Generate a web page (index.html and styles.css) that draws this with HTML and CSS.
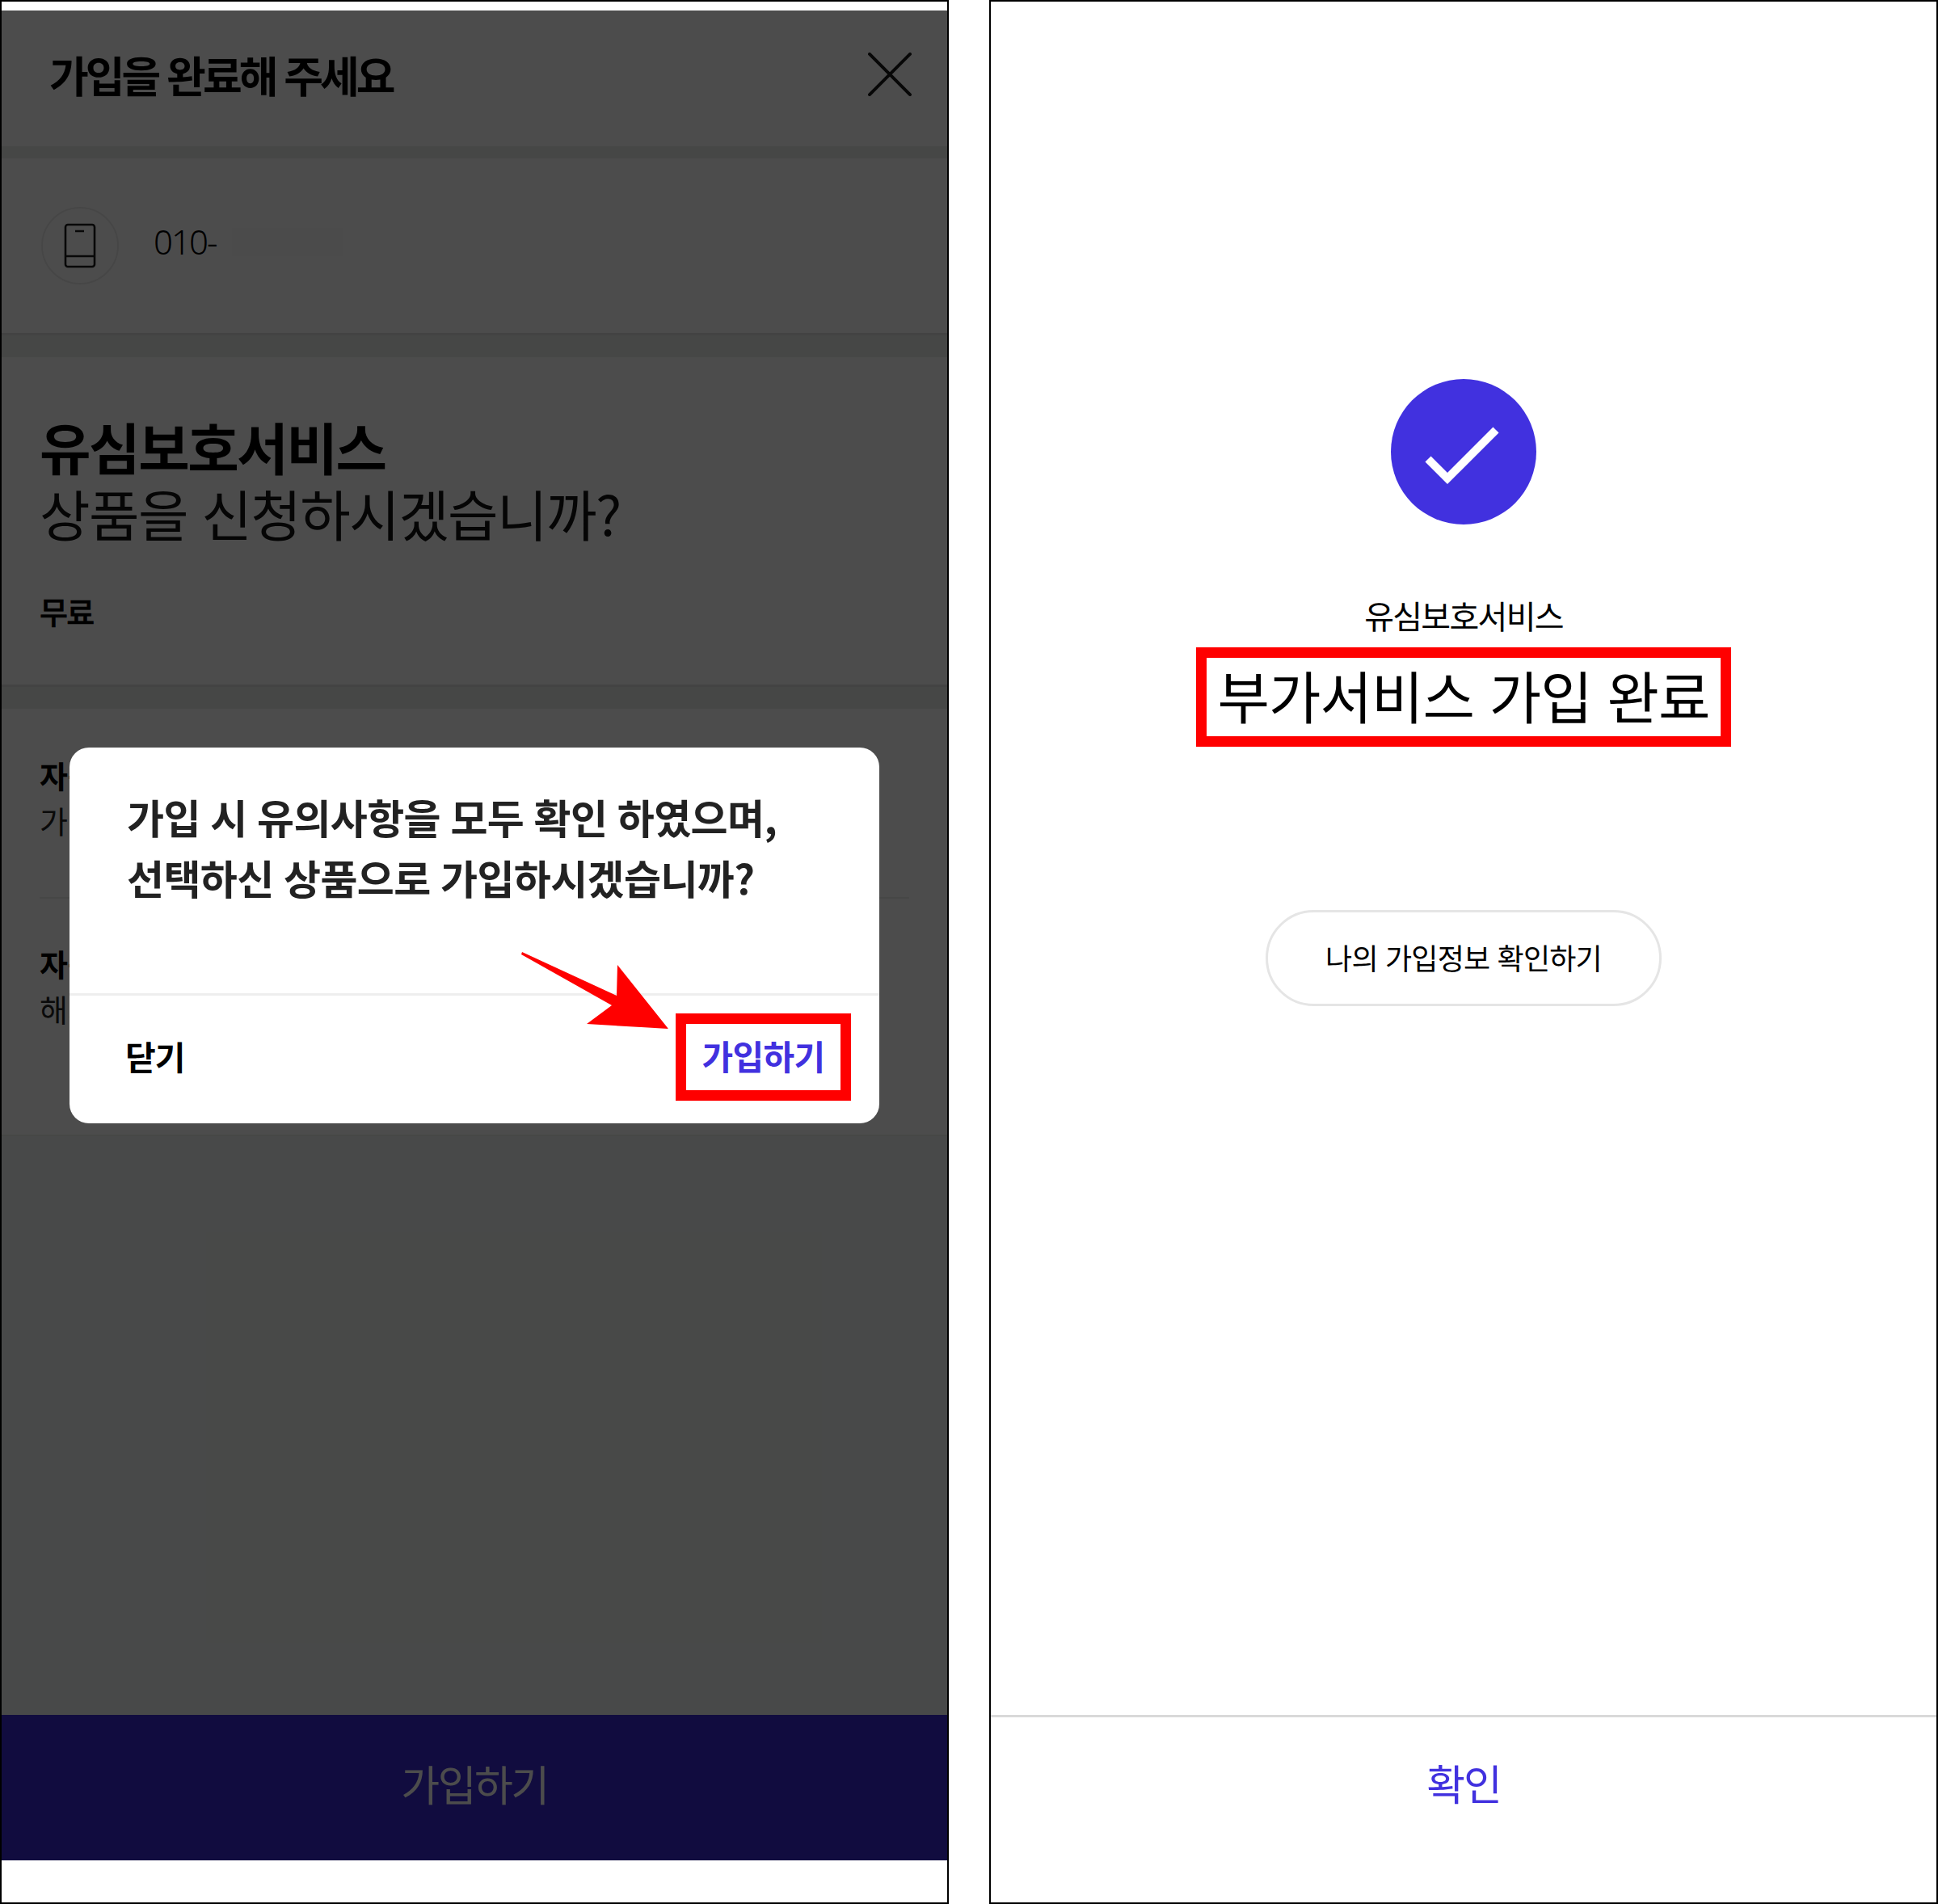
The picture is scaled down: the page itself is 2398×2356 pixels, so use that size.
FILE: index.html
```html
<!DOCTYPE html>
<html lang="ko">
<head>
<meta charset="utf-8">
<title>유심보호서비스 가입</title>
<link rel="stylesheet" href="styles.css">
</head>
<body>
<div class="page">
  <section class="panel panel-left">
    <div class="screen">
      <header class="head">
        <h1 class="head-title">가입을 완료해 주세요</h1>
        <svg class="close" viewBox="0 0 55 55" width="54" height="54"><path d="M2 2 L53 53 M53 2 L2 53" fill="none" stroke="#1a1a1a" stroke-width="4" stroke-linecap="round"/></svg>
      </header>
      <div class="band band-s"></div>
      <div class="line-row">
        <div class="phone-badge">
          <svg viewBox="0 0 40 56" width="40" height="56"><rect x="2" y="2" width="36" height="52" rx="3" fill="none" stroke="#1c1c1c" stroke-width="2.6"/><path d="M2 41 H38 M14 10 H25" fill="none" stroke="#1c1c1c" stroke-width="2.6"/></svg>
        </div>
        <span class="line-num">010-</span><span class="mask"></span>
      </div>
      <div class="band band-m"></div>
      <div class="product">
        <h2 class="product-name">유심보호서비스</h2>
        <p class="product-ask">상품을 신청하시겠습니까?</p>
        <p class="product-price">무료</p>
      </div>
      <div class="band band-m"></div>
      <ul class="terms">
        <li class="term term-a"><strong class="term-title">자동연장</strong><span class="term-text">가입 후</span></li>
        <li class="term term-b"><strong class="term-title">자동해지</strong><span class="term-text">해지 시</span></li>
      </ul>
      <div class="fill"></div>
      <button class="bar-btn">가입하기</button>
      <div class="overlay"></div>
      <div class="modal">
        <p class="modal-text">가입 시 유의사항을 모두 확인 하였으며,<br>선택하신 상품으로 가입하시겠습니까?</p>
        <div class="modal-foot">
          <span class="modal-close">닫기</span>
          <span class="modal-ok">가입하기</span>
        </div>
      </div>
      <svg class="arrow" viewBox="0 0 190 100" width="190" height="100"><polygon points="1,0 118,54 119,16 182,95 81,89 112,66 0,3" fill="#ff0000"/></svg>
    </div>
  </section>
  <section class="panel panel-right">
    <div class="done">
      <svg class="done-icon" viewBox="0 0 180 180" width="180" height="180"><circle cx="90" cy="90" r="90" fill="#4131df"/><polyline points="46,99 70,123 130,63" fill="none" stroke="#fff" stroke-width="10"/></svg>
      <p class="done-sub">유심보호서비스</p>
      <p class="done-title">부가서비스 가입 완료</p>
      <span class="done-pill">나의 가입정보 확인하기</span>
    </div>
    <footer class="done-foot">확인</footer>
  </section>
</div>
</body>
</html>
```
FILE: styles.css
```css
* { box-sizing: border-box; }
html, body { margin: 0; padding: 0; }
body { background: #fff; font-family: "Noto Sans CJK KR", "Noto Sans", sans-serif; color: #000; }
h1, h2, p, ul { margin: 0; padding: 0; }
li { list-style: none; }

.page { display: flex; justify-content: space-between; width: 2398px; height: 2356px; }
.panel { border: 2px solid #000; height: 2356px; display: flex; flex-direction: column; }
.panel-left { width: 1174px; padding: 11px 0 52px; }
.panel-right { width: 1174px; }

.screen { position: relative; flex: 1; display: flex; flex-direction: column; background: #f1f6f3; overflow: hidden; }
.overlay { position: absolute; inset: 0; background: rgba(0,0,0,.7); }

.head { height: 168px; background: #fff; display: flex; align-items: center; justify-content: space-between; padding: 0 44px 14px 59px; }
.head-title { font-size: 53px; font-weight: 700; letter-spacing: -4px; line-height: 1; margin-top: 5px; }
.close { display: block; margin-top: 3px; }

.band { background: #e9eeeb; }
.band-s { height: 15px; }
.band-m { height: 30px; border-top: 3px solid #dfe1df; }

.line-row { height: 216px; background: #fff; display: flex; align-items: center; padding: 0 0 0 49px; }
.phone-badge { width: 96px; height: 96px; border-radius: 50%; border: 2px solid #ececec; display: flex; align-items: center; justify-content: center; }
.line-num { font-family: "Noto Sans", sans-serif; font-weight: 300; font-size: 42px; line-height: 1; letter-spacing: -2px; margin: 0 0 10px 43px; }
.mask { width: 138px; height: 35px; margin: 0 0 10px 20px; background: #fcfcfc; }

.product { height: 405px; background: #fff; padding: 69px 50px 0 47px; }
.product-name { font-size: 69px; font-weight: 700; letter-spacing: -2.4px; line-height: 82px; }
.product-ask { font-size: 68px; font-weight: 400; letter-spacing: -1.6px; line-height: 84px; color: #111; }
.product-price { font-size: 38px; font-weight: 500; -webkit-text-stroke: .6px #000; letter-spacing: -1.8px; line-height: 44px; margin-top: 57px; }

.terms { background: #fff; border-bottom: 2px solid #eceeec; }
.term { display: flex; flex-direction: column; padding: 57px 47px 0; }
.term-a { height: 235px; position: relative; }
.term-b { height: 292px; padding-top: 55px; }
.term-b::before { content: ""; position: absolute; left: 47px; right: 47px; margin-top: -57px; height: 2px; background: #eceeec; }
.term-title { font-size: 38px; font-weight: 700; line-height: 50px; }
.term-text { font-size: 38px; line-height: 50px; margin-top: 6px; color: #222; }

.fill { flex: 1; }
.bar-btn { height: 180px; border: 0; background: #392ad3; color: #fff; font: inherit; font-size: 52px; letter-spacing: -2.5px; padding: 0 0 11px; }

.modal { position: absolute; left: 84px; top: 912px; width: 1002px; height: 465px; background: #fff; border-radius: 24px; display: flex; flex-direction: column; }
.modal-text { flex: 1; padding: 48px 0 0 71px; font-size: 50px; font-weight: 700; letter-spacing: -.6px; word-spacing: -1px; line-height: 75px; color: #222; border-bottom: 3px solid #eee; }
.modal-foot { height: 158px; display: flex; align-items: center; justify-content: space-between; padding: 0 35px 6px 69px; }
.modal-close { font-size: 41px; font-weight: 700; letter-spacing: -1px; line-height: 1; margin-bottom: 4px; }
.modal-ok { font-size: 42px; font-weight: 700; letter-spacing: -.6px; line-height: 78px; padding-bottom: 4px; color: #4131df; border: 13px solid #f00; width: 217px; text-align: center; }

.arrow { position: absolute; left: 643px; top: 1165px; }

.done { flex: 1; display: flex; flex-direction: column; align-items: center; padding-top: 467px; }
.done-icon { display: block; }
.done-sub { font-size: 40px; letter-spacing: -1.7px; line-height: 50px; margin-top: 87px; }
.done-title { font-size: 70px; letter-spacing: -.9px; line-height: 92px; padding-bottom: 5px; border: 13px solid #f00; width: 662px; text-align: center; margin-top: 15px; }
.done-pill { display: flex; align-items: center; justify-content: center; width: 490px; height: 119px; border: 3px solid #e5e5e5; border-radius: 60px; font-size: 36px; letter-spacing: -.8px; padding-bottom: 3px; margin-top: 202px; }
.done-foot { height: 232px; border-top: 3px solid #d9d9d9; text-align: center; font-size: 52px; letter-spacing: -2.2px; color: #4131df; line-height: 108px; padding-top: 27px; }
```
